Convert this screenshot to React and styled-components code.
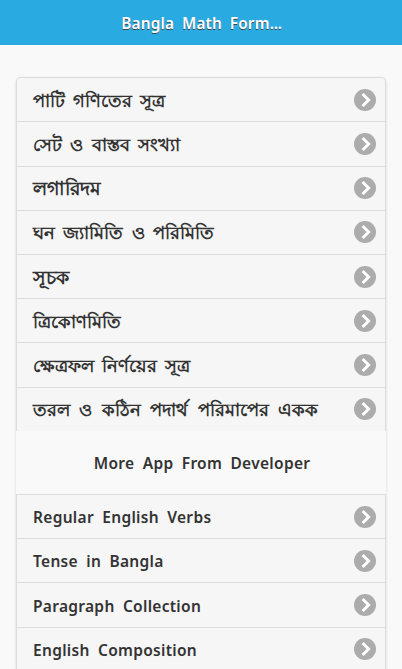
import React from 'react';
import styled, { createGlobalStyle } from 'styled-components';

const GlobalStyle = createGlobalStyle`
  * { box-sizing: border-box; }
  html { overflow: hidden; }
  body {
    margin: 0;
    background: #f9f9f9;
    color: #333;
    font: 600 15.5px/20px "Noto Sans", sans-serif;
  }
`;

const Page = styled.div`
  height: 669px;
  overflow: hidden;
`;

const Header = styled.header`
  height: 45px;
  padding-top: 14px;
  background: #29abe2;
`;

const Title = styled.h1`
  margin: 0;
  padding-left: 1px;
  text-align: center;
  color: #fff;
  font-size: 15.4px;
  font-weight: 600;
  line-height: 20px;
  letter-spacing: 0.2px;
  word-spacing: 3.4px;
  text-shadow: 0 1px 0 #444;
`;

const Ellipsis = styled.span`
  letter-spacing: -0.2px;
`;

const List = styled.ul`
  list-style: none;
  margin: 32.2px 16px 0;
  padding: 0;
  border-radius: 5px;
  box-shadow: 0 1px 3px rgba(0, 0, 0, 0.15);
`;

const Item = styled.li`
  height: 44.2px;
  padding: 0 9px 0 16px;
  display: flex;
  align-items: center;
  justify-content: space-between;
  background: #f6f6f6;
  border: 1px solid #ddd;
  border-bottom: 0;
  text-shadow: 0 1px 0 #f3f3f3;
  &:first-child { border-radius: 5px 5px 0 0; }
`;

const Topic = styled.span`
  white-space: nowrap;
  font-size: ${p => p.$size}px;
  line-height: 20px;
  word-spacing: ${p => p.$gap || 3.8}px;
`;

const AppName = styled.span`
  white-space: nowrap;
  line-height: 20px;
  padding-top: 1.1px;
  letter-spacing: 0.3px;
  word-spacing: 4px;
`;

const Divider = styled.li`
  height: 63.4px;
  padding: 0 0 0 2px;
  display: flex;
  align-items: center;
  justify-content: center;
  background: #f9f9f9;
`;

const Disc = styled.svg`
  display: block;
  flex: none;
  width: 22px;
  height: 22px;
`;

const Chevron = () => (
  <Disc viewBox="0 0 22 22">
    <circle cx="11" cy="11" r="11" fill="#acacac" />
    <path d="M8.6 5 14.6 11 8.6 17" fill="none" stroke="#fff" strokeWidth="3" />
  </Disc>
);

const topics = [
  { text: 'পাটি গণিতের সূত্র', size: 17.6, gap: 3.3 },
  { text: 'সেট ও বাস্তব সংখ্যা', size: 18, gap: 3.8 },
  { text: 'লগারিদম', size: 19.4 },
  { text: 'ঘন জ্যামিতি ও পরিমিতি', size: 18, gap: 3.8 },
  { text: 'সূচক', size: 19.4 },
  { text: 'ত্রিকোণমিতি', size: 18.4 },
  { text: 'ক্ষেত্রফল নির্ণয়ের সূত্র', size: 17.7, gap: 3.2 },
  { text: 'তরল ও কঠিন পদার্থ পরিমাপের একক', size: 18.4, gap: 4.6 },
];

const apps = [
  'Regular English Verbs',
  'Tense in Bangla',
  'Paragraph Collection',
  'English Composition',
];

export default function App() {
  return (
    <Page>
      <GlobalStyle />
      <Header>
        <Title>Bangla Math Form<Ellipsis>...</Ellipsis></Title>
      </Header>
      <List>
        {topics.map(({ text, size, gap }) => (
          <Item key={text}><Topic $size={size} $gap={gap}>{text}</Topic><Chevron /></Item>
        ))}
        <Divider><AppName>More App From Developer</AppName></Divider>
        {apps.map(text => (
          <Item key={text}><AppName>{text}</AppName><Chevron /></Item>
        ))}
      </List>
    </Page>
  );
}
